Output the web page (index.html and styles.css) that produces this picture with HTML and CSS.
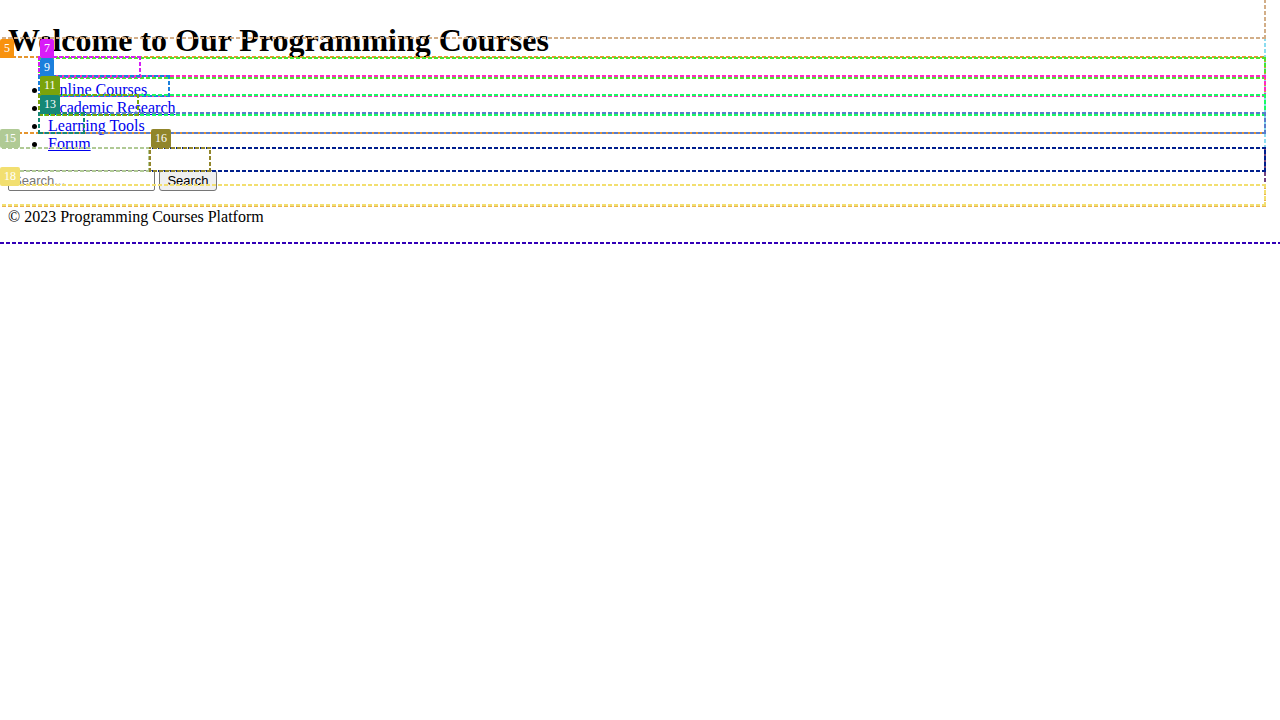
FILE: index.html
```html
<!DOCTYPE html>
<html lang="en">
<head>
<meta charset="utf-8">
<title>Programming Courses</title>
<link rel="stylesheet" href="styles.css">
</head>
<body>
<header>
  <h1>Welcome to Our Programming Courses</h1>
</header>
<nav>
  <ul class="links">
    <li><a href="#courses">Online Courses</a></li>
    <li><a href="#research">Academic Research</a></li>
    <li><a href="#tools">Learning Tools</a></li>
    <li><a href="#forum">Forum</a></li>
  </ul>
</nav>
<form class="search">
  <input class="field" type="text" placeholder="Search..." aria-label="Search">
  <button class="submit" type="button">Search</button>
</form>
<footer>
  <p class="copyright">© 2023 Programming Courses Platform</p>
</footer>

<div class="overlay">
  <div class="box page"></div>
  <div class="box content"></div>
  <div class="box nav"></div>
  <div class="box heading"></div>
  <div class="box list"></div>
  <div class="box item item-1"></div>
  <div class="box link link-1"></div>
  <div class="box item item-2"></div>
  <div class="box link link-2"></div>
  <div class="box item item-3"></div>
  <div class="box link link-3"></div>
  <div class="box item item-4"></div>
  <div class="box link link-4"></div>
  <div class="box form"></div>
  <div class="box input"></div>
  <div class="box button"></div>
  <div class="box foot"></div>
  <div class="box note"></div>
  <span class="tag tag-5">5</span>
  <span class="tag tag-7">7</span>
  <span class="tag tag-9">9</span>
  <span class="tag tag-11">11</span>
  <span class="tag tag-13">13</span>
  <span class="tag tag-15">15</span>
  <span class="tag tag-16">16</span>
  <span class="tag tag-18">18</span>
</div>
</body>
</html>
```
FILE: styles.css
```css
* { box-sizing: border-box; }
body {
  margin: 0;
  padding: 8px;
  background: #fff;
  color: #000;
  font-family: "Liberation Serif", "Times New Roman", serif;
  font-size: 16px;
  line-height: 18px;
}
h1 {
  margin: 14px 0 22px;
  font-size: 32px;
  line-height: 37px;
}
.links {
  margin: 0 0 17px;
  padding-left: 40px;
}
.links a { color: #00e; }
.search {
  display: flex;
  align-items: center;
  gap: 4px;
}
.field, .submit {
  height: 21px;
  margin: 0;
  font-family: "Liberation Sans", Arial, sans-serif;
  font-size: 13px;
}
.field {
  width: 147px;
  padding: 1px 4px;
  border: 1px solid #767676;
  border-radius: 2px;
}
.field::placeholder { color: #757575; }
.submit {
  width: 58px;
  padding: 1px 6px;
  border: 1px solid #767676;
  border-radius: 3px;
  background: #efefef;
  color: #000;
}
.copyright { margin: 17px 0; }

/* Outlines laid over the page, one for each element */
.overlay {
  position: absolute;
  inset: 0;
  overflow: hidden;
  pointer-events: none;
}
.box {
  --row: linear-gradient(90deg, transparent 2px, currentColor 2px);
  --column: linear-gradient(transparent 2px, currentColor 2px);
  position: absolute;
  left: -2px;
  right: 14px;
  background:
    var(--row) right top / 6px 2px repeat-x,
    var(--row) right bottom / 6px 2px repeat-x,
    var(--column) left bottom / 2px 6px repeat-y,
    var(--column) right bottom / 2px 6px repeat-y;
}
.page { top: -10px; right: -2px; height: 254px; color: #3300b8; }
.content { top: 147px; height: 59px; color: #744580; }
.heading { top: -10px; height: 49px; color: #d2ae88; }
.nav { top: 37px; height: 112px; color: #8bdcf0; }
.list {
  top: 56px;
  height: 78px;
  color: #e6952e;
  background-position: left top, left bottom, left bottom, right bottom;
}
.item { left: 38px; height: 22px; }
.item-1 { top: 57px; color: #48e52e; }
.item-2 { top: 75px; color: #ff29c3; }
.item-3 { top: 94px; color: #1afa62; }
.item-4 { top: 112px; color: #587ccb; }
.link { left: 38px; right: auto; height: 22px; }
.link-1 { top: 56px; width: 103px; color: #d51df5; }
.link-2 { top: 75px; width: 132px; color: #1b7fdc; }
.link-3 { top: 94px; width: 101px; color: #7aa30b; }
.link-4 { top: 112px; width: 47px; color: #168875; }
.form { top: 147px; height: 25px; color: #001f8d; }
.input { top: 147px; right: auto; width: 152px; height: 25px; color: #b0ca95; }
.button { top: 147px; left: 149px; right: auto; width: 62px; height: 25px; color: #91852a; }
.foot { top: 184px; height: 23px; color: #eab150; }
.note { top: 184px; height: 22px; color: #f2df70; }
.tag {
  position: absolute;
  padding: 2px 4px;
  border-radius: 2px;
  color: #fff;
  font-size: 12px;
  line-height: 15px;
}
.tag-5 { left: 0; top: 39px; background: #f8920e; }
.tag-7 { left: 40px; top: 39px; background: #d81bf8; }
.tag-9 { left: 40px; top: 58px; background: #1b7fdc; }
.tag-11 { left: 40px; top: 76px; background: #7aa30b; }
.tag-13 { left: 40px; top: 95px; background: #168875; }
.tag-15 { left: 0; top: 129px; background: #b0ca95; }
.tag-16 { left: 151px; top: 129px; background: #91852a; }
.tag-18 { left: 0; top: 167px; background: #f2df70; }
```
